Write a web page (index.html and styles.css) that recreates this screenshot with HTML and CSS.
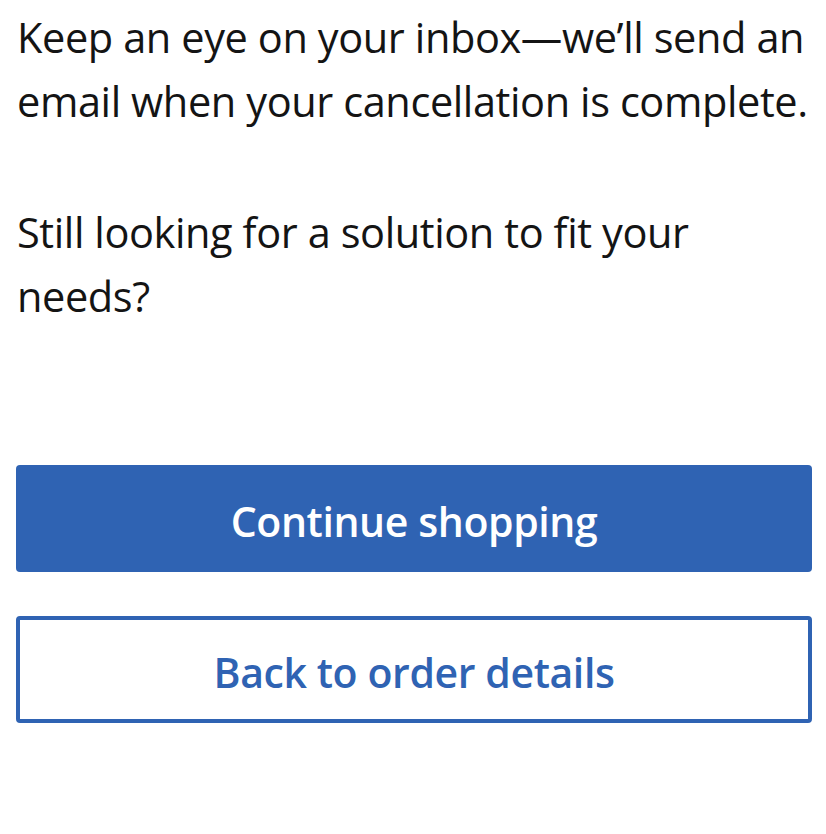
FILE: index.html
```html
<!DOCTYPE html>
<html lang="en">
<head>
<meta charset="utf-8">
<title>Cancellation</title>
<link rel="stylesheet" href="styles.css">
</head>
<body>
<main class="page">
  <p class="msg">Keep an eye on your inbox—we’ll send an email when your cancellation is complete.</p>
  <p class="msg msg-second">Still looking for a solution to fit your needs?</p>
  <div class="actions">
    <button class="btn btn-primary" type="button">Continue shopping</button>
    <button class="btn btn-secondary" type="button">Back to order details</button>
  </div>
</main>
</body>
</html>
```

FILE: styles.css
```css
html, body {
  margin: 0;
  padding: 0;
  background: #ffffff;
}

.page {
  padding: 5px 13px 0 17px;
  font-family: "Open Sans", "Noto Sans", sans-serif;
  color: #141414;
}

.msg {
  margin: 0;
  font-size: 41.5px;
  line-height: 64px;
  letter-spacing: -0.4px;
}

.msg-second {
  margin-top: 67px;
}

.actions {
  margin-top: 137px;
  display: flex;
  flex-direction: column;
  gap: 44px;
}

.btn {
  height: 107px;
  border-radius: 4px;
  font-family: "Open Sans", "Noto Sans", sans-serif;
  font-size: 41px;
  font-weight: 600;
  letter-spacing: -0.4px;
  cursor: pointer;
  width: 796px;
  margin-left: -1px;
  padding: 5px 0 0;
}

.btn-primary {
  background: #2f63b3;
  color: #ffffff;
  border: none;
}

.btn-secondary {
  background: #ffffff;
  color: #2f63b3;
  border: 4px solid #2f63b3;
}
```
